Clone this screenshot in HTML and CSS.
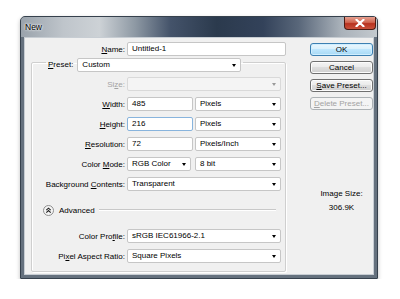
FILE: index.html
```html
<!DOCTYPE html>
<html lang="en">
<head>
    <meta charset="UTF-8">
    <title>New</title>
    <link rel="stylesheet" href="styles.css">
</head>
<body>
    <div class="window">
        <div class="titlebar">
            <span class="title">New</span>
            <div class="close">
                <svg width="10" height="8" viewBox="0 0 10 8"><path d="M1.5 0.8 L8.5 7.2 M8.5 0.8 L1.5 7.2" stroke="#fff" stroke-width="2.2" stroke-linecap="round"/></svg>
            </div>
        </div>
        <div class="client">
            <div class="main">
                <div class="row top-row">
                    <label class="lbl lbl-top"><u>N</u>ame:</label>
                    <div class="field name-field">Untitled-1</div>
                </div>
                <fieldset class="preset">
                    <legend class="legend">
                        <label class="legend-lbl"><u>P</u>reset:</label>
                        <div class="field select preset-select">Custom</div>
                    </legend>

                    <div class="row">
                        <label class="lbl disabled">Si<u>z</u>e:</label>
                        <div class="field select full dim"></div>
                    </div>
                    <div class="row">
                        <label class="lbl"><u>W</u>idth:</label>
                        <div class="field num">485</div>
                        <div class="field select unit">Pixels</div>
                    </div>
                    <div class="row">
                        <label class="lbl"><u>H</u>eight:</label>
                        <div class="field num focus">216</div>
                        <div class="field select unit">Pixels</div>
                    </div>
                    <div class="row">
                        <label class="lbl"><u>R</u>esolution:</label>
                        <div class="field num">72</div>
                        <div class="field select unit">Pixels/Inch</div>
                    </div>
                    <div class="row">
                        <label class="lbl">Color <u>M</u>ode:</label>
                        <div class="field select mode">RGB Color</div>
                        <div class="field select unit">8 bit</div>
                    </div>
                    <div class="row">
                        <label class="lbl">Background <u>C</u>ontents:</label>
                        <div class="field select full">Transparent</div>
                    </div>

                    <div class="advanced">
                        <svg class="adv-icon" width="11" height="11" viewBox="0 0 11 11">
                            <circle cx="5.5" cy="5.5" r="5" fill="#f4f4f4" stroke="#8e8e8e"/>
                            <path d="M3.3 5.2 L5.5 3.2 L7.7 5.2 M3.3 7.6 L5.5 5.6 L7.7 7.6" fill="none" stroke="#222" stroke-width="1.1"/>
                        </svg>
                        <span class="adv-text">Advanced</span>
                        <span class="adv-line"></span>
                    </div>

                    <div class="row">
                        <label class="lbl">Color Pro<u>f</u>ile:</label>
                        <div class="field select full">sRGB IEC61966-2.1</div>
                    </div>
                    <div class="row">
                        <label class="lbl">Pi<u>x</u>el Aspect Ratio:</label>
                        <div class="field select full">Square Pixels</div>
                    </div>
                </fieldset>
            </div>

            <div class="side">
                <div class="btn btn-default">OK</div>
                <div class="btn">Cancel</div>
                <div class="btn"><u>S</u>ave Preset...</div>
                <div class="btn btn-disabled"><u>D</u>elete Preset...</div>
                <div class="image-size">
                    <div>Image Size:</div>
                    <div class="size-value">306.9K</div>
                </div>
            </div>
        </div>
    </div>
</body>
</html>
```

FILE: styles.css
```css
body {
    margin: 0;
    background: #fff;
    font-family: "Liberation Sans", Arial, sans-serif;
    font-size: 8px;
    color: #000;
}
.window {
    margin: 16px 0 0 20px;
    width: 358px;
    height: 263px;
    box-sizing: border-box;
    border: 1px solid #36414d;
    border-radius: 5px 5px 1px 1px;
    background: #65717e;
    padding: 0 3px 3px;
    display: flex;
    flex-direction: column;
    box-shadow: 0 2px 4px rgba(0, 0, 0, 0.25);
}
.titlebar {
    height: 20px;
    margin: 0 -3px;
    padding: 0 1px 0 4px;
    display: flex;
    align-items: flex-start;
    border-radius: 4px 4px 0 0;
    background: linear-gradient(90deg, #9aa3ac 0%, #bfc5cb 12%, #cdd2d6 22%, #8e99a4 32%, #44536a 42%, #2b3a4d 55%, #33425a 68%, #59677a 78%, #aab2ba 90%, #c3c9ce 100%);
}
.title {
    margin-top: 5px;
    font-size: 8.5px;
    color: #000;
    text-shadow: 0 0 3px #fff, 0 0 2px #fff;
}
.close {
    margin-left: auto;
    width: 32px;
    height: 13px;
    box-sizing: border-box;
    border: 1px solid #4c1a12;
    border-top: none;
    border-radius: 0 0 4px 4px;
    background: linear-gradient(#e6a090 0%, #d0654f 45%, #b8321f 55%, #c8503a 100%);
    display: flex;
    align-items: center;
    justify-content: center;
}
.client {
    flex: 1;
    border: 1px solid #c7cdd3;
    background: #f0f0f0;
    display: flex;
}
.main {
    width: 272px;
    padding-top: 4px;
}
.row {
    display: flex;
    align-items: center;
    height: 14px;
    margin-bottom: 6px;
}
.top-row {
    margin-bottom: 2px;
}
.lbl {
    width: 93px;
    margin-right: 2px;
    text-align: right;
    white-space: nowrap;
}
.lbl-top {
    width: 100px;
}
.disabled {
    color: #a3a3a3;
}
.field {
    height: 14px;
    box-sizing: border-box;
    border: 1px solid #c6c6c6;
    border-radius: 2px;
    background: #fff;
    padding-left: 4px;
    line-height: 12px;
    white-space: nowrap;
}
.focus {
    border-color: #88b4dd;
}
.name-field {
    width: 159px;
}
.num {
    width: 66px;
    margin-right: 2px;
}
.unit {
    width: 86px;
}
.mode {
    width: 64px;
    margin-right: 4px;
}
.full {
    width: 154px;
}
.select {
    display: flex;
    align-items: center;
    padding-right: 4px;
}
.select::after {
    content: "";
    margin-left: auto;
    border-left: 2.5px solid transparent;
    border-right: 2.5px solid transparent;
    border-top: 3px solid #000;
}
.dim {
    background: #f4f4f4;
    border-color: #d9d9d9;
}
.dim::after {
    border-top-color: #9a9a9a;
}
.preset {
    margin: 2px 0 0 6px;
    width: 255px;
    box-sizing: border-box;
    border: 1px solid #cfcfcf;
    border-radius: 2px;
    box-shadow: inset 1px 1px 0 #fff, 1px 1px 0 #fff;
    padding: 11px 0 2px 0;
}
.legend {
    height: 8px;
    padding: 0 2px;
    margin-left: 14px;
    display: flex;
    align-items: flex-start;
}
.legend-lbl {
    line-height: 14px;
    margin-right: 4px;
}
.preset-select {
    width: 164px;
}
.advanced {
    display: flex;
    align-items: center;
    height: 14px;
    margin: 12px 0 12px 11px;
}
.adv-icon {
    margin-right: 5px;
}
.adv-text {
    margin-right: 4px;
}
.adv-line {
    width: 177px;
    height: 1px;
    background: #c8c8c8;
    border-bottom: 1px solid #fff;
}
.side {
    width: 70px;
    margin: 5px 0 0 24px;
    display: flex;
    flex-direction: column;
    gap: 5px;
}
.btn {
    height: 13px;
    box-sizing: border-box;
    border: 1px solid #707070;
    border-radius: 3px;
    background: linear-gradient(#f4f4f4 0%, #ebebeb 45%, #dddddd 50%, #cfcfcf 100%);
    box-shadow: inset 0 0 0 1px #fcfcfc;
    text-align: center;
    line-height: 11px;
}
.btn-default {
    border-color: #3c7fb1;
    background: linear-gradient(#eaf6fd 0%, #d9f0fc 45%, #bee6fd 50%, #a7d9f5 100%);
    box-shadow: inset 0 0 0 1px #cfeeff;
}
.btn-disabled {
    border-color: #adb2b5;
    background: #f4f4f4;
    color: #a3a3a3;
    box-shadow: none;
}
.image-size {
    margin-top: 74px;
    text-align: center;
}
.size-value {
    margin-top: 5px;
}
```
